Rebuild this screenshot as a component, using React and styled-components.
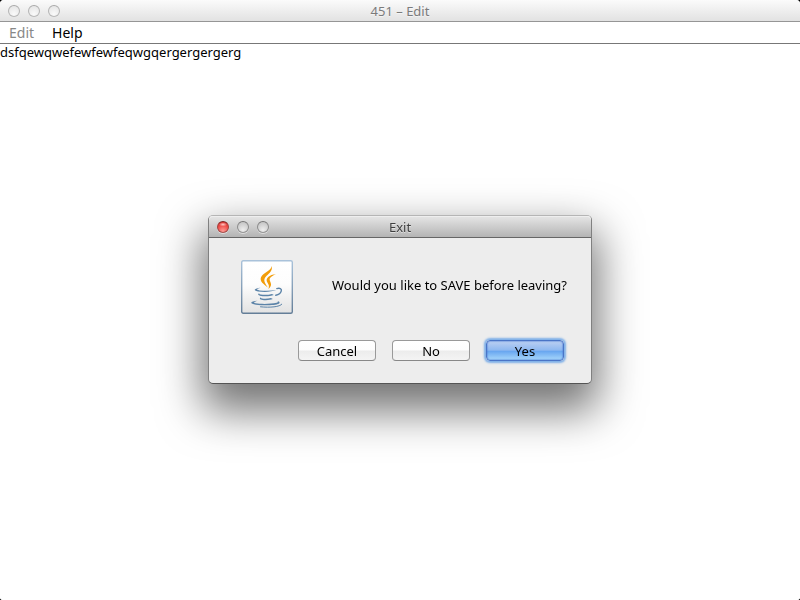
import React, { useState } from "react";
import styled, { createGlobalStyle, css } from "styled-components";

const GlobalStyle = createGlobalStyle`
  *, *::before, *::after { box-sizing: border-box; }
  html, body, #root { height: 100%; }
  body {
    margin: 0;
    overflow: hidden;
    background: #fff;
    font-family: "Lucida Grande", "Noto Sans", "Open Sans", sans-serif;
    font-size: 13px;
    color: #000;
  }
  button, textarea { font: inherit; color: inherit; }
`;

const Desktop = styled.div`
  min-height: 100%;
  background: #000;
  display: flex;
`;

const EditorWindow = styled.main`
  flex: 1;
  display: flex;
  flex-direction: column;
  background: #fff;
  border-radius: 4px 4px 3px 3px;
  overflow: hidden;
`;

const TitleBar = styled.header`
  display: grid;
  grid-template-columns: 1fr auto 1fr;
  align-items: center;
  height: 22px;
  padding: 0 8px;
  color: #7b7b7b;
  background: linear-gradient(#fbfbfb, #e2e2e2);
  border-bottom: 1px solid #969696;

  ${({ $active }) =>
    $active &&
    css`
      color: #3f3f3f;
      background: linear-gradient(#e6e6e6, #b4b4b4);
      border-bottom-color: #666;
      border-radius: 4px 4px 0 0;
      box-shadow: inset 0 1px #eee;
    `}
`;

const Title = styled.h1`
  margin: 0;
  font-size: 13px;
  line-height: 20px;
  font-weight: 400;
  text-shadow: 0 1px rgba(255, 255, 255, 0.5);
`;

const Lights = styled.div`
  display: flex;
  gap: 8px;
`;

const lightTones = {
  faint: css`
    border-color: #a9a9a9 #b5b5b5 #b9b9b9;
    background: radial-gradient(circle at 50% 80%, #fafafa, #e2e2e2);
  `,
  gray: css`
    border-color: #777 #8c8c8c #969696;
    background: radial-gradient(circle at 50% 80%, #eee, #bdbdbd);
    box-shadow: 0 1px rgba(255, 255, 255, 0.5);
  `,
  red: css`
    border-color: #7d2422 #a3403d #a8504d;
    background:
      radial-gradient(ellipse 4px 2px at 50% 25%, #ffc9c5, transparent),
      radial-gradient(circle at 50% 90%, #ff9c96, #ee4a45 60%, #c9302e);
    box-shadow: 0 1px rgba(255, 255, 255, 0.5);
  `,
};

const Light = styled.button`
  width: 12px;
  height: 12px;
  padding: 0;
  border: 1px solid;
  border-radius: 50%;
  ${({ $tone }) => lightTones[$tone]}
`;

const MenuBar = styled.nav`
  display: flex;
  height: 22px;
  border-bottom: 1px solid #777;
`;

const MenuItem = styled.button`
  padding: 0 9px;
  border: 0;
  background: none;
  font-size: 14px;
  line-height: 20px;

  &:disabled { color: #888; }
`;

const TextArea = styled.textarea`
  flex: 1;
  width: 100%;
  padding: 0;
  border: 0;
  outline: 0;
  resize: none;
  line-height: 16px;
  background: #fff;
`;

const Overlay = styled.div`
  position: fixed;
  inset: 0;
  padding-bottom: 1px;
  display: grid;
  place-items: center;
`;

const Dialog = styled.section`
  width: 384px;
  max-width: 100%;
  border: 1px solid;
  border-color: #b5b5b5 #808080 #555;
  border-radius: 5px;
  background: #ededed;
  background-clip: padding-box;
  box-shadow: 0 21px 44px 6px rgba(0, 0, 0, 0.55);
`;

const DialogBody = styled.div`
  padding: 22px 20px 22px 32px;
`;

const Message = styled.div`
  display: flex;
  align-items: center;
  justify-content: space-between;
  line-height: 18px;
`;

const MessageText = styled.p`
  margin: 0 4px 4px 0;
`;

const JavaTile = styled.svg`
  display: block;
  width: 52px;
  height: 54px;
`;

const Actions = styled.div`
  display: flex;
  justify-content: flex-end;
  gap: 16px;
  padding: 26px 7px 0 0;
`;

const PushButton = styled.button`
  width: 78px;
  height: 21px;
  padding: 0;
  border: 1px solid;
  border-color: #999 #999 #888;
  border-radius: 4px;
  line-height: 18px;
  background: linear-gradient(#fff 0%, #fdfdfd 48%, #ececec 52%, #f4f4f4 100%);

  ${({ $primary }) =>
    $primary &&
    css`
      border-color: #4a74c6;
      background: linear-gradient(#bdd0f2 0%, #8fb8f0 48%, #68a6f0 54%, #a9d8fb 100%);
      box-shadow: inset 0 0 1px 1px rgba(70, 120, 210, 0.4), 0 0 2px 2px #7fb0e8;
    `}
`;

function WindowLights({ tones }) {
  const names = ["Close", "Minimize", "Zoom"];
  return (
    <Lights>
      {tones.map((tone, i) => (
        <Light key={names[i]} type="button" aria-label={names[i]} $tone={tone} />
      ))}
    </Lights>
  );
}

function JavaIcon() {
  return (
    <JavaTile viewBox="0 0 52 54" role="img" aria-label="Java">
      <defs>
        <linearGradient id="tile" x1="0" y1="0" x2="0" y2="1">
          <stop offset="0" stopColor="#fff" />
          <stop offset="0.45" stopColor="#fdfdfd" />
          <stop offset="1" stopColor="#e2e2e2" />
        </linearGradient>
        <linearGradient id="edge" x1="0" y1="0" x2="0" y2="1">
          <stop offset="0" stopColor="#a9c2da" />
          <stop offset="1" stopColor="#647e98" />
        </linearGradient>
      </defs>
      <rect x="0.7" y="0.7" width="50.6" height="52.6" rx="1.5" fill="url(#tile)" stroke="url(#edge)" strokeWidth="1.4" />
      <g fill="#f29d0a">
        <path d="M30.6 6C32 10.4 28.6 13 25.4 16C22 19.4 23 22 26.8 27.4C22.6 24.2 18.4 21.2 20 17.2C21.8 12.8 30.4 11 30.6 6Z" />
        <path d="M35 14C30.2 16.4 28 17.8 28.8 20.6C29.8 23.4 31.6 25.6 27.4 29C28.6 26 27.6 24.6 26.4 22.6C23.8 18.2 28.4 14.8 35 14Z" />
      </g>
      <g fill="#5b83a8">
        <path d="M19.5 27.8C13.2 28.6 11.6 30.6 17 31.4C23 32.3 30.6 32 35.4 30.1C30 31 23.6 31.1 18.6 30.4C14.6 29.8 15.6 28.9 19.5 27.8Z" />
        <path d="M18.6 32.8C15.8 34.6 17.4 35.8 21.6 36.2C25.6 36.6 30 36.1 32.8 35.1L31 34C27.2 35 23 35.1 19.8 34.5C18 34.1 17.7 33.6 18.6 32.8Z" />
        <path d="M19.9 37.2C17.5 38.9 19.4 39.8 23 40.2C26.4 40.5 29.6 40 31.8 39.1L29.9 38C26.8 38.8 23.8 38.9 21.2 38.5C19.7 38.2 19.5 37.9 19.9 37.2Z" />
        <path d="M16.8 40.8C8.2 41.2 8.6 43.9 15 44.7C23.8 45.8 34.6 45.2 37.8 43.7C39.6 42.7 38 41.6 36.6 41.1C37.4 42 36.8 42.4 35.6 42.8C30 44.1 20 44.2 14.6 43.3C11.8 42.8 13.4 41.6 16.8 40.8Z" />
      </g>
      <g fill="none" stroke="#5b83a8" strokeLinecap="round">
        <path d="M35.8 28.6C38.6 27.6 40.9 28.6 40.3 30.9C39.7 33.2 37.2 34.8 34.8 35.3" strokeWidth="1.4" />
        <path d="M19.5 46.8C29 47.8 39 46.9 40.8 44.2" strokeWidth="1" />
      </g>
    </JavaTile>
  );
}

export default function App() {
  const [text, setText] = useState("dsfqewqwefewfewfeqwgqergergergerg");
  return (
    <>
      <GlobalStyle />
      <Desktop>
        <EditorWindow>
          <TitleBar>
            <WindowLights tones={["faint", "faint", "faint"]} />
            <Title>451 – Edit</Title>
          </TitleBar>
          <MenuBar>
            <MenuItem type="button" disabled>Edit</MenuItem>
            <MenuItem type="button">Help</MenuItem>
          </MenuBar>
          <TextArea
            aria-label="Document"
            spellCheck={false}
            value={text}
            onChange={(e) => setText(e.target.value)}
          />
        </EditorWindow>
      </Desktop>
      <Overlay>
        <Dialog role="dialog" aria-labelledby="exit-title" aria-describedby="exit-message">
          <TitleBar $active>
            <WindowLights tones={["red", "gray", "gray"]} />
            <Title as="h2" id="exit-title">Exit</Title>
          </TitleBar>
          <DialogBody>
            <Message>
              <JavaIcon />
              <MessageText id="exit-message">Would you like to SAVE before leaving?</MessageText>
            </Message>
            <Actions>
              <PushButton type="button">Cancel</PushButton>
              <PushButton type="button">No</PushButton>
              <PushButton type="button" $primary>Yes</PushButton>
            </Actions>
          </DialogBody>
        </Dialog>
      </Overlay>
    </>
  );
}
